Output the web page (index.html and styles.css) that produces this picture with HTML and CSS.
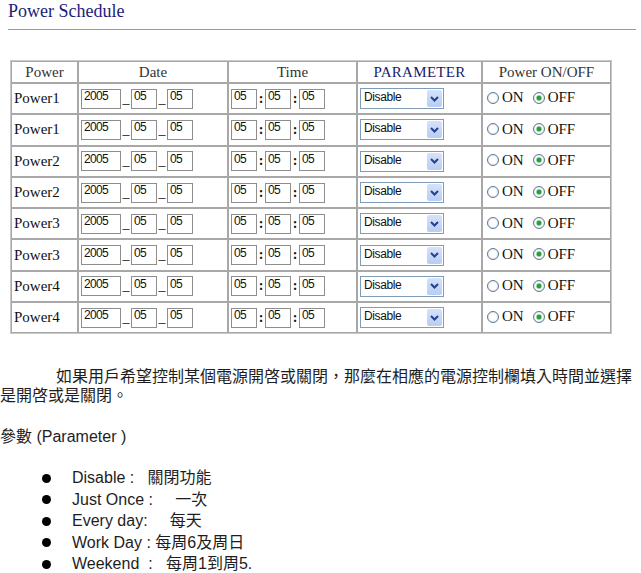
FILE: index.html
```html
<!DOCTYPE html>
<html lang="zh-Hant">
<head>
    <meta charset="UTF-8">
    <title>Power Schedule</title>
    <link rel="stylesheet" href="styles.css">
</head>
<body>
    <div class="page-head">
        <h1>Power Schedule</h1>
        <hr class="rule">
    </div>
    <table class="schedule">
        <colgroup>
            <col class="c-power"><col class="c-date"><col class="c-time"><col class="c-param"><col class="c-onoff">
        </colgroup>
        <thead>
            <tr>
                <th>Power</th>
                <th>Date</th>
                <th>Time</th>
                <th class="param-head">PARAMETER</th>
                <th>Power ON/OFF</th>
            </tr>
        </thead>
        <tbody id="rows"></tbody>
    </table>

    <div class="notes">
        <p class="intro"><span class="line">如果用戶希望控制某個電源開啓或關閉，那麼在相應的電源控制欄填入時間並選擇</span><br>是開啓或是關閉。</p>
        <p class="param-title">參數 (Parameter )</p>
        <ul class="param-list">
            <li>Disable :&nbsp;&nbsp; 關閉功能</li>
            <li>Just Once :&nbsp;&nbsp;&nbsp;&nbsp; 一次</li>
            <li>Every day:&nbsp;&nbsp;&nbsp;&nbsp; 每天</li>
            <li>Work Day : 每周6及周日</li>
            <li>Weekend&nbsp; :&nbsp;&nbsp; 每周1到周5.</li>
        </ul>
    </div>

    <script>
        var names = ["Power1", "Power1", "Power2", "Power2", "Power3", "Power3", "Power4", "Power4"];
        var tbody = document.getElementById("rows");

        function box(cls, val) {
            return '<input type="text" class="field ' + cls + '" value="' + val + '">';
        }

        names.forEach(function (name, i) {
            var tr = document.createElement("tr");
            tr.innerHTML =
                '<td class="name">' + name + '</td>' +
                '<td>' + box("w-year", "2005") + '<span class="sep">_</span>' + box("w-two", "05") + '<span class="sep">_</span>' + box("w-two", "05") + '</td>' +
                '<td>' + box("w-two", "05") + '<span class="sep colon">:</span>' + box("w-two", "05") + '<span class="sep colon">:</span>' + box("w-two", "05") + '</td>' +
                '<td><div class="select"><span class="select-value">Disable</span>' +
                '<span class="select-btn"><svg width="9" height="6" viewBox="0 0 9 6"><path d="M1 1 L4.5 4.5 L8 1" fill="none" stroke="#27408b" stroke-width="2"/></svg></span></div></td>' +
                '<td class="onoff"><label><input type="radio" name="p' + i + '">ON</label>' +
                '<label><input type="radio" name="p' + i + '" checked>OFF</label></td>';
            tbody.appendChild(tr);
        });
    </script>
</body>
</html>
```

FILE: styles.css
```css
body { margin: 0; background: #fff; color: #111; font-family: "Liberation Serif", serif; }
.page-head { padding: 1px 5px 0 8px; }
h1 { margin: 0; font-size: 18px; font-weight: normal; line-height: 20px; color: #1c1c7c; }
.rule { margin: 8px 0 0; border: 0; border-top: 1px solid #9a9a9a; height: 0; }

.schedule { margin: 30px 0 0 10px; width: 600px; table-layout: fixed; border-collapse: separate; border-spacing: 0; border: 1px solid #c8c8c8; }
.c-power { width: 67px; } .c-date { width: 150px; } .c-time { width: 129px; } .c-param { width: 125px; } .c-onoff { width: 129px; }
.schedule th, .schedule td { border: 1px solid #a8a8a8; padding: 0 2px; font-size: 15px; white-space: nowrap; }
.schedule th { height: 20px; font-weight: normal; color: #333; text-align: center; }
.schedule td { height: 29.3px; }
.param-head { color: #1a1a6e !important; letter-spacing: 0.3px; }
.name { padding-left: 2px !important; }

.field { box-sizing: border-box; height: 20px; padding: 0 2px 5px; border: 1px solid #8e8e8e; font-family: "Liberation Sans", sans-serif; font-size: 12px; letter-spacing: -0.7px; color: #111; vertical-align: middle; margin: 0; }
.w-year { width: 40px; }
.w-two { width: 26px; }
.sep { display: inline-block; width: 10px; text-align: center; vertical-align: middle; font-size: 14px; line-height: 20px; }
.colon { width: 8px; font-weight: bold; }

.select { display: flex; box-sizing: border-box; width: 84px; height: 21px; border: 1px solid #7f9db9; margin-left: 0; background: #fff; }
.select-value { flex: 1; padding: 1px 0 0 3px; font-family: "Liberation Sans", sans-serif; font-size: 12px; letter-spacing: -0.4px; line-height: 14px; }
.select-btn { display: flex; align-items: center; justify-content: center; width: 15px; margin: 1px; background: linear-gradient(#d5e2fb, #b7cdf5); border-radius: 2px; }

.onoff { padding-left: 4px !important; }
.onoff label { display: inline-flex; align-items: center; margin-right: 9px; }
.onoff input { appearance: none; -webkit-appearance: none; width: 12px; height: 12px; margin: 0 3px 0 0; border: 1px solid #5f7890; border-radius: 50%; background: radial-gradient(circle, #fff 0 3px, #e6e9ee 5px); }
.onoff input:checked { background: radial-gradient(circle, #27a03c 0 2px, #9fd8a6 2.6px, #fff 3.4px, #e6e9ee 5px); }

.notes { font-family: "Liberation Sans", "Noto Sans CJK TC", sans-serif; font-size: 16px; color: #1e1e1e; }
.intro { margin: 33px 0 0; text-indent: 56px; line-height: 19px; }
.intro .line { white-space: nowrap; letter-spacing: 0; }
.param-title { margin: 22px 0 0; line-height: 19px; }
.param-list { list-style: none; margin: 21px 0 0; padding: 0 0 0 42px; }
.param-list li { display: flex; align-items: center; line-height: 21.5px; white-space: pre; }
.param-list li::before { content: ""; width: 9px; height: 9px; border-radius: 50%; background: #000; margin-right: 21px; }
```
